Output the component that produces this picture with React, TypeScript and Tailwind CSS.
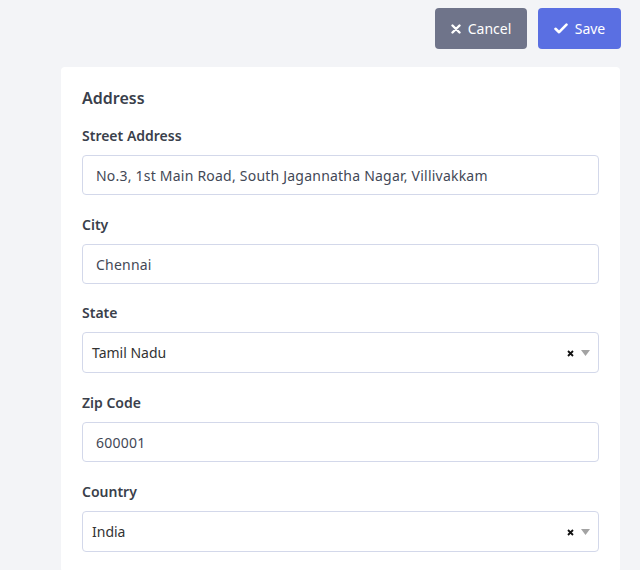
import { useState } from "react";

const fieldCls =
  "block w-full h-[40px] rounded-[4px] border border-[#d3d8ea] bg-white px-[13px] text-[14px] tracking-[0.22px] text-[#434856] outline-none";

const labelCls = "mb-[9px] block text-[14px] font-semibold leading-[20px] text-[#3a3f4b]";

function Select({ value }: { value: string }) {
  return (
    <div className="flex h-[41px] w-full items-center rounded-[4px] border border-[#d3d8ea] bg-white pl-[9px] pr-[6px] text-[14px] text-[#333333]">
      <span className="flex-1">{value}</span>
      <svg width="7" height="7" viewBox="0 0 7 7" className="mr-[7px] mt-[2px]">
        <path d="M1 1l5 5M6 1l-5 5" stroke="#111" strokeWidth="1.8" />
      </svg>
      <svg width="9" height="6" viewBox="0 0 9 6" className="mr-[2px]">
        <path d="M0 0h9L4.5 6z" fill="#a3a3a3" />
      </svg>
    </div>
  );
}

export default function App() {
  const [street, setStreet] = useState("No.3, 1st Main Road, South Jagannatha Nagar, Villivakkam");
  const [city, setCity] = useState("Chennai");
  const [zip, setZip] = useState("600001");

  return (
    <div className="min-h-screen bg-[#f3f4f7] font-['Noto_Sans',sans-serif]">
      <div className="flex justify-end gap-[11px] pr-[19px] pt-[8px]">
        <button className="flex h-[41px] w-[92px] items-center justify-center gap-[7px] rounded-[4px] bg-[#6f748a] text-[14px] text-white">
          <svg width="10" height="10" viewBox="0 0 10 10">
            <path d="M1.5 1.5l7 7M8.5 1.5l-7 7" stroke="white" strokeWidth="2.4" strokeLinecap="round" />
          </svg>
          Cancel
        </button>
        <button className="flex h-[41px] w-[83px] items-center justify-center gap-[7px] rounded-[4px] bg-[#5a6fe2] text-[14px] text-white">
          <svg width="14" height="11" viewBox="0 0 14 11">
            <path d="M1.5 5.8l3.6 3.4L12.5 1.6" stroke="white" strokeWidth="2.6" fill="none" strokeLinecap="round" strokeLinejoin="round" />
          </svg>
          Save
        </button>
      </div>

      <div className="ml-[61px] mr-[20px] mt-[18px] rounded-[4px] bg-white px-[21px] pb-[20px] pt-[19px]">
        <h2 className="text-[16px] font-semibold leading-[24px] text-[#3a3f4b]">Address</h2>

        <label className={`${labelCls} mt-[16px]`}>Street Address</label>
        <input className={fieldCls} value={street} onChange={(e) => setStreet(e.target.value)} />

        <label className={`${labelCls} mt-[20px]`}>City</label>
        <input className={fieldCls} value={city} onChange={(e) => setCity(e.target.value)} />

        <label className={`${labelCls} mt-[19px]`}>State</label>
        <Select value="Tamil Nadu" />

        <label className={`${labelCls} mt-[20px]`}>Zip Code</label>
        <input className={fieldCls} value={zip} onChange={(e) => setZip(e.target.value)} />

        <label className={`${labelCls} mt-[20px]`}>Country</label>
        <Select value="India" />
      </div>
    </div>
  );
}
